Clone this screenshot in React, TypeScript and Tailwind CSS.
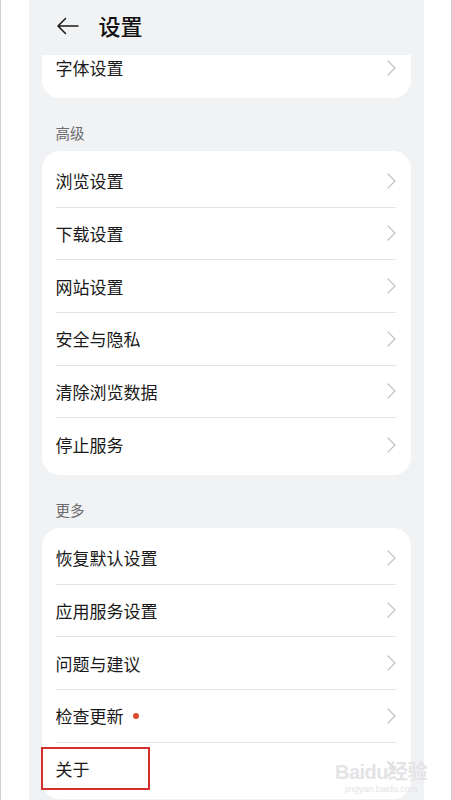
import React from 'react';

const font = { fontFamily: '"Noto Sans CJK SC", "Noto Sans", sans-serif' };

function Chevron() {
  return (
    <svg width="9" height="16" viewBox="0 0 9 16" fill="none" className="shrink-0">
      <path d="M1 1l7 7-7 7" stroke="#c4c4c6" strokeWidth="1.3" strokeLinecap="round" strokeLinejoin="round" />
    </svg>
  );
}

function Row({ label, dot, last }: { label: string; dot?: boolean; last?: boolean }) {
  return (
    <div className="h-[52.67px] pl-[14px] pr-[15px]">
      <div className={`flex h-full items-center justify-between ${last ? '' : 'border-b border-[#e4e4e6]'}`}>
        <div className="flex items-center">
          <span className="text-[17px] leading-none text-[#191919]">{label}</span>
          {dot && <span className="ml-[9px] h-[6px] w-[6px] rounded-full bg-[#e0492d]" />}
        </div>
        <Chevron />
      </div>
    </div>
  );
}

function SectionLabel({ text }: { text: string }) {
  return (
    <div className="px-[14px] pb-[9px] pt-[26px] text-[14.5px] leading-[18px] text-[#6b6b6d]">{text}</div>
  );
}

export default function App() {
  const advanced = ['浏览设置', '下载设置', '网站设置', '安全与隐私', '清除浏览数据', '停止服务'];
  const more = ['恢复默认设置', '应用服务设置', '问题与建议', '检查更新', '关于'];

  return (
    <div style={font} className="relative h-[800px] w-[452px] overflow-hidden border-x border-[#cfcfcf] bg-white">
      <div className="mx-auto flex h-full w-[395px] flex-col bg-[#f1f2f4] px-[13px]">
        {/* header */}
        <div className="flex h-[55px] shrink-0 items-start pl-[14px] pt-[13px]">
          <svg width="24" height="18" viewBox="0 0 24 18" fill="none" className="mt-[4px]">
            <path d="M22 9H2M9.5 1.5L2 9l7.5 7.5" stroke="#1a1a1a" strokeWidth="1.5" strokeLinecap="round" strokeLinejoin="round" />
          </svg>
          <span className="ml-[19px] text-[22px] font-medium leading-[24px] text-[#111]">设置</span>
        </div>

        {/* scrolled card */}
        <div className="h-[43px] shrink-0 rounded-b-[18px] bg-white">
          <div className="flex h-[25px] items-center justify-between pl-[14px] pr-[15px]">
            <span className="text-[17px] leading-none text-[#191919]">字体设置</span>
            <Chevron />
          </div>
        </div>

        <SectionLabel text="高级" />
        <div className="shrink-0 rounded-[18px] bg-white py-[4px]">
          {advanced.map((l, i) => (
            <Row key={l} label={l} last={i === advanced.length - 1} />
          ))}
        </div>

        <SectionLabel text="更多" />
        <div className="shrink-0 rounded-[18px] bg-white py-[4px]">
          {more.map((l, i) => (
            <Row key={l} label={l} dot={l === '检查更新'} last={i === more.length - 1} />
          ))}
        </div>
      </div>

      {/* annotation box */}
      <div className="absolute left-[40px] top-[747px] h-[43px] w-[109px] border-2 border-[#d1302c]" />

      {/* watermark */}
      <div className="pointer-events-none absolute left-[334px] top-[762px] flex flex-col items-center text-[#e4e4e6]" style={{ fontFamily: '"Liberation Sans", "Noto Sans CJK SC", sans-serif' }}>
        <span className="text-[20px] font-bold leading-none tracking-tight">Baidu经验</span>
        <span className="mt-[3px] text-[9px] leading-none">jingyan.baidu.com</span>
      </div>
    </div>
  );
}
